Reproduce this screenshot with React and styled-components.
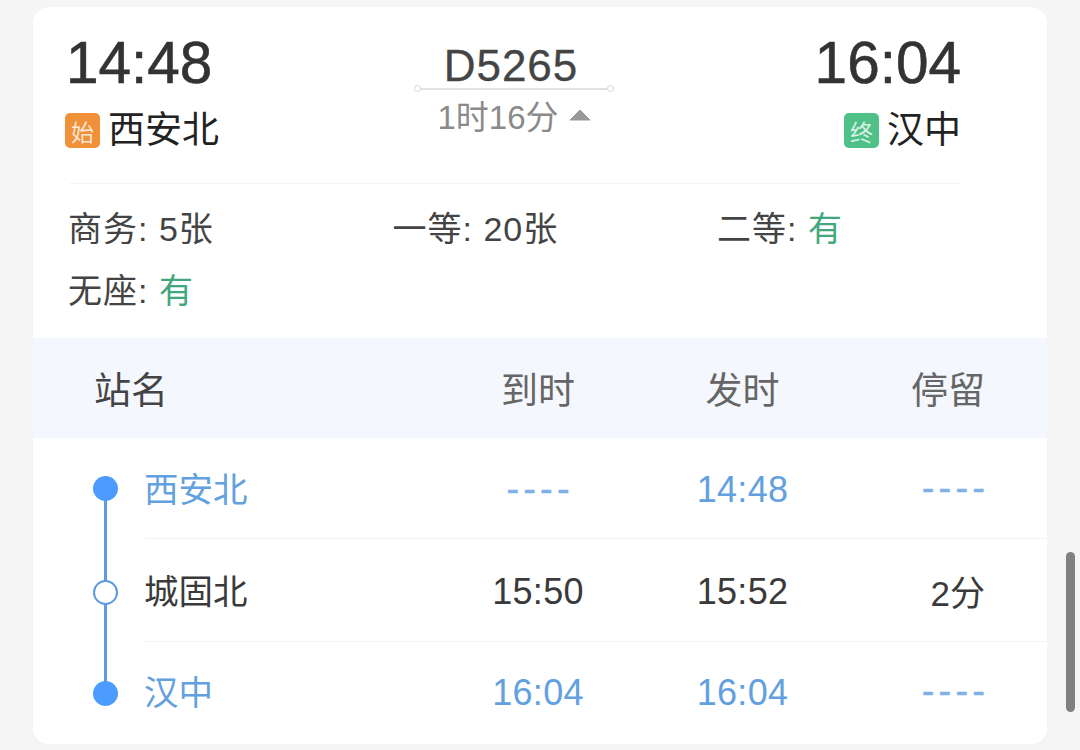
import React from 'react'
import styled, { createGlobalStyle } from 'styled-components'

const GlobalStyle = createGlobalStyle`
  html, body {
    margin: 0;
    height: 100%;
    overflow: hidden;
    background: #f5f5f6;
  }
  * {
    box-sizing: border-box;
  }
`

const Page = styled.div`
  position: relative;
  width: 1080px;
  height: 750px;
  padding: 7px 33px 0;
  font-family: "Liberation Sans", "Noto Sans CJK SC", sans-serif;
`

const Card = styled.div`
  height: 737px;
  background: #fff;
  border-radius: 16px;
  overflow: hidden;
`

const Summary = styled.div`
  height: 331px;
  padding: 24px 86px 0 33px;
`

const Journey = styled.div`
  display: grid;
  grid-template-columns: 348px 200px 1fr;
  height: 152px;
`

const Divider = styled.div`
  height: 1px;
  margin-left: 4px;
  background: #f3f3f3;
`

const Stop = styled.div`
  display: flex;
  flex-direction: column;
  align-items: ${(p) => (p.$end ? 'flex-end' : 'flex-start')};
`

const Clock = styled.div`
  font-size: 58.5px;
  line-height: 64px;
  color: #333;
  -webkit-text-stroke: 0.6px #333;
`

const StopName = styled.div`
  display: flex;
  align-items: center;
  gap: 8px;
  height: 50px;
  margin-top: 7px;
  font-size: 37px;
  color: #222;
`

const Tag = styled.span`
  display: flex;
  align-items: center;
  justify-content: center;
  width: 35px;
  height: 35px;
  margin: 7px 0 0 -1px;
  border-radius: 5px;
  background: ${(p) => p.$color};
  color: rgba(255, 255, 255, 0.8);
  font-size: 23px;
`

const Middle = styled.div`
  display: flex;
  flex-direction: column;
  align-items: center;
`

const TrainNo = styled.div`
  position: relative;
  width: 100%;
  height: 50px;
  margin-top: 9px;
  padding-right: 6px;
  text-align: center;
  font-size: 44px;
  line-height: 52px;
  letter-spacing: 1px;
  color: #444;
  -webkit-text-stroke: 0.3px #444;
  border-bottom: 2px solid #e2e2e2;

  &::before,
  &::after {
    content: '';
    position: absolute;
    bottom: -3.5px;
    width: 5px;
    height: 5px;
    border: 1px solid #d5d5d5;
    border-radius: 50%;
    background: #fff;
  }
  &::before {
    left: 0;
  }
  &::after {
    right: 0;
  }
`

const Duration = styled.div`
  display: flex;
  align-items: center;
  gap: 10px;
  height: 50px;
  font-size: 33px;
  color: #8a8a8a;
`

const Seats = styled.div`
  display: grid;
  grid-template-columns: repeat(3, 324.5px);
  grid-auto-rows: 62px;
  padding: 11px 0 0 2px;
  font-size: 34px;
  letter-spacing: 1px;
  color: #444;
`

const Seat = styled.div`
  display: flex;
  align-items: center;
  white-space: pre;
`

const Avail = styled.span`
  color: #43a77e;
`

const TableHead = styled.div`
  display: grid;
  grid-template-columns: 342px 204px 205px 1fr;
  align-items: center;
  height: 100px;
  padding: 0 62px 0 61px;
  background: #f4f8fe;
  font-size: 37px;
  color: #666;
`

const HeadCell = styled.div`
  text-align: ${(p) => p.$align || 'center'};
  color: ${(p) => p.$color || 'inherit'};
`

const Row = styled.div`
  display: flex;
  height: ${(p) => p.$height}px;
  padding-left: 60px;
`

const Rail = styled.div`
  position: relative;
  display: flex;
  align-items: center;
  justify-content: center;
  flex: none;
  width: 25px;
  margin-right: 27px;

  &::before {
    content: '';
    position: absolute;
    left: 11px;
    width: 3px;
    background: #5b9be0;
    top: ${(p) => (p.$first ? '50%' : '0')};
    bottom: ${(p) => (p.$last ? '50%' : '0')};
  }
`

const Dot = styled.span`
  position: relative;
  top: ${(p) => (p.$hollow ? '2px' : '0')};
  width: 25px;
  height: 25px;
  border-radius: 50%;
  background: ${(p) => (p.$hollow ? '#fff' : '#4c9bff')};
  border: ${(p) => (p.$hollow ? '2.5px solid #5b9be0' : 'none')};
`

const RowBody = styled.div`
  flex: 1;
  display: grid;
  grid-template-columns: 291px 204px 205px 1fr;
  align-items: center;
  padding: ${(p) => (p.$last ? '0 62px 3px 0' : '0 62px 0 0')};
  border-bottom: ${(p) => (p.$last ? 'none' : '1px solid #f3f3f3')};
  color: ${(p) => (p.$active ? '#62a0e0' : '#3a3a3a')};
`

const Name = styled.div`
  margin: 0 0 3px -1px;
  font-size: 34.5px;
`

const Time = styled.div`
  padding-top: 3px;
  font-size: 36px;
  letter-spacing: 0.3px;
  text-align: center;
`

const Stay = styled.div`
  font-size: 35px;
  text-align: right;
`

const Dashes = styled.span`
  font-size: 38px;
  letter-spacing: 4.2px;
  margin-right: -4.2px;
  color: #7fb0e6;
  -webkit-text-stroke: 0.4px #7fb0e6;
`

const ScrollThumb = styled.div`
  position: absolute;
  left: 1066px;
  top: 552px;
  width: 9px;
  height: 160px;
  border-radius: 5px;
  background: #808080;
`

const stations = [
  { name: '西安北', arrive: '----', leave: '14:48', stay: '----', active: true, height: 101 },
  { name: '城固北', arrive: '15:50', leave: '15:52', stay: '2分', height: 103 },
  { name: '汉中', arrive: '16:04', leave: '16:04', stay: '----', active: true, height: 102 },
]

const cellText = (text) => (text === '----' ? <Dashes>{text}</Dashes> : text)

export default function App() {
  return (
    <>
      <GlobalStyle />
      <Page>
        <Card>
          <Summary>
            <Journey>
              <Stop>
                <Clock>14:48</Clock>
                <StopName>
                  <Tag $color="#f0913a">始</Tag>
                  西安北
                </StopName>
              </Stop>
              <Middle>
                <TrainNo>D5265</TrainNo>
                <Duration>
                  1时16分
                  <svg width="22" height="12" viewBox="0 0 22 12">
                    <path d="M11 1 L21 11 L1 11 Z" fill="#999" stroke="#999" strokeLinejoin="round" />
                  </svg>
                </Duration>
              </Middle>
              <Stop $end>
                <Clock>16:04</Clock>
                <StopName>
                  <Tag $color="#4fc088">终</Tag>
                  汉中
                </StopName>
              </Stop>
            </Journey>
            <Divider />
            <Seats>
              <Seat>商务: 5张</Seat>
              <Seat>一等: 20张</Seat>
              <Seat>二等: <Avail>有</Avail></Seat>
              <Seat>无座: <Avail>有</Avail></Seat>
            </Seats>
          </Summary>
          <TableHead>
            <HeadCell $align="left" $color="#444">站名</HeadCell>
            <HeadCell>到时</HeadCell>
            <HeadCell>发时</HeadCell>
            <HeadCell $align="right">停留</HeadCell>
          </TableHead>
          {stations.map((s, i) => (
            <Row key={s.name} $height={s.height}>
              <Rail $first={i === 0} $last={i === stations.length - 1}>
                <Dot $hollow={!s.active} />
              </Rail>
              <RowBody $active={s.active} $last={i === stations.length - 1}>
                <Name>{s.name}</Name>
                <Time>{cellText(s.arrive)}</Time>
                <Time>{cellText(s.leave)}</Time>
                <Stay>{cellText(s.stay)}</Stay>
              </RowBody>
            </Row>
          ))}
        </Card>
        <ScrollThumb />
      </Page>
    </>
  )
}
